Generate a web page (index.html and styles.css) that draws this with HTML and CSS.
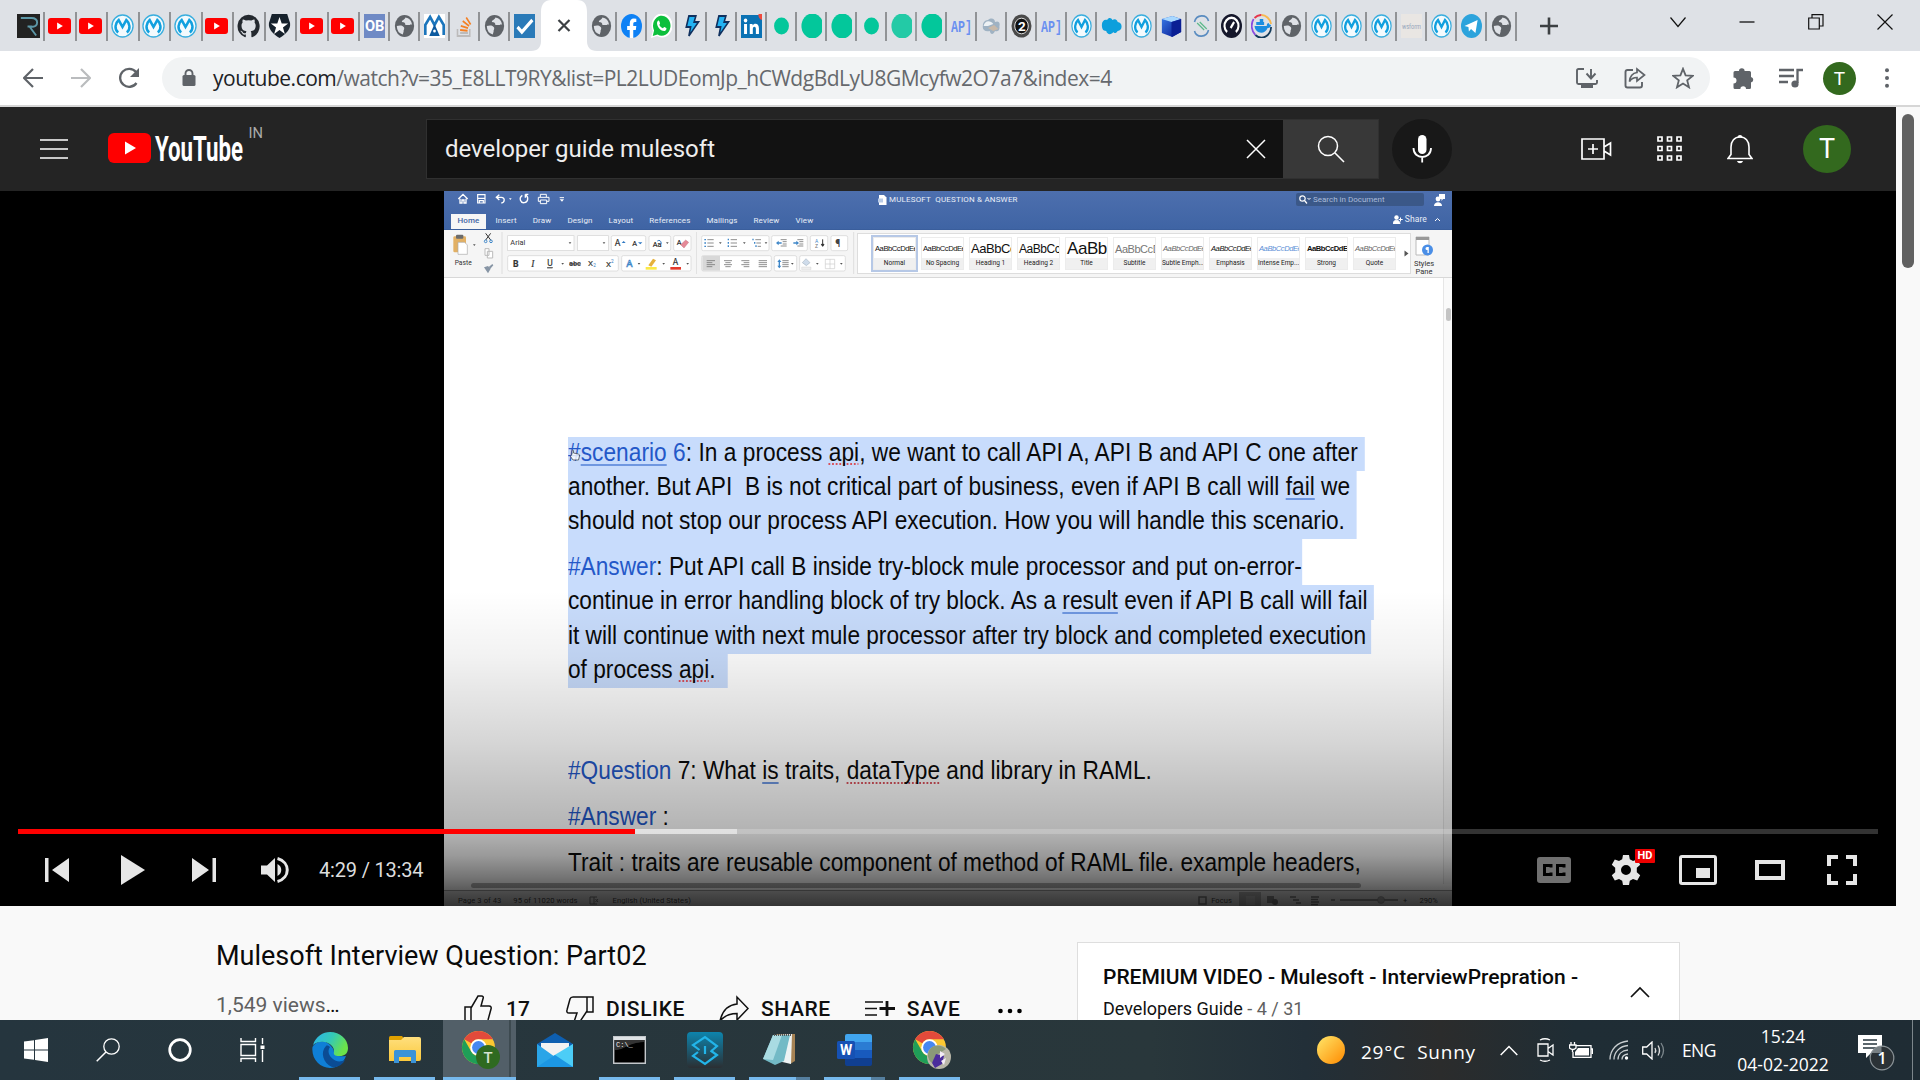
FILE: index.html
```html
<!DOCTYPE html>
<html lang="en">
<head>
<meta charset="utf-8">
<title>Mulesoft Interview Question: Part02 - YouTube</title>
<link rel="stylesheet" href="styles.css">
</head>
<body>
<svg class="defs" aria-hidden="true">
  <defs>
    <linearGradient id="gEdge" x1="0" y1="0" x2="1" y2="0.4"><stop offset="0" stop-color="#2bb3ee"/><stop offset=".55" stop-color="#35c9b5"/><stop offset="1" stop-color="#6be34a"/></linearGradient>
    <linearGradient id="gSun" x1="0" y1="0" x2="1" y2="1"><stop offset="0" stop-color="#ffe76a"/><stop offset="1" stop-color="#ff8a00"/></linearGradient>
    <linearGradient id="gFold" x1="0" y1="0" x2="0" y2="1"><stop offset="0" stop-color="#ffdf7e"/><stop offset="1" stop-color="#fbc93c"/></linearGradient>
    <linearGradient id="gStudio" x1="0" y1="0" x2="0" y2="1"><stop offset="0" stop-color="#0d84ad"/><stop offset="1" stop-color="#2b2f33"/></linearGradient>
    <linearGradient id="gCube" x1="0" y1="0" x2="1" y2="1"><stop offset="0" stop-color="#3a7be8"/><stop offset="1" stop-color="#06148c"/></linearGradient>
  </defs>
  <symbol id="f-r" viewBox="0 0 24 24" preserveAspectRatio="none"><path d="M0 0h24v24H0z" fill="#222"/><path d="M4 4h11c4 0 6 2 6 4.500s-2 5-6 4h-4M13 12.500l7 9" fill="none" stroke="#5d98a8" stroke-width="2"/></symbol>
  <symbol id="f-yt" viewBox="0 0 24 24" preserveAspectRatio="none"><rect y="4" width="24" height="16" rx="3" fill="#f00"/><path d="M9.500 8.500v7l6-3.500z" fill="#fff"/></symbol>
  <symbol id="f-m" viewBox="0 0 24 24" preserveAspectRatio="none"><circle cx="12" cy="12" r="11" fill="#f3fafd" stroke="#3aaede" stroke-width="1.400"/><path d="M7.500 18.500C3 15 4.500 9 8 6l4 7 4-7c3.500 3 5 9 .5 12.500" fill="none" stroke="#11a0df" stroke-width="2.600"/></symbol>
  <symbol id="f-gh" viewBox="0 0 24 24" preserveAspectRatio="none"><path fill="#24292f" d="M12 .8a11.500 11.500 0 0 0-3.600 22.400c.6.1.8-.2.8-.6v-2c-3.200.7-3.900-1.500-3.900-1.500-.5-1.300-1.300-1.700-1.300-1.700-1-.7.1-.7.1-.7 1.200.1 1.800 1.200 1.800 1.200 1 1.800 2.700 1.300 3.400 1 .1-.8.400-1.300.7-1.600-2.600-.3-5.300-1.300-5.300-5.700 0-1.300.5-2.300 1.200-3.100-.1-.3-.5-1.500.1-3.100 0 0 1-.3 3.200 1.200a11 11 0 0 1 5.800 0c2.200-1.500 3.200-1.200 3.200-1.200.6 1.600.2 2.800.1 3.100.8.800 1.200 1.900 1.200 3.100 0 4.400-2.700 5.400-5.300 5.700.4.400.8 1.100.8 2.200v3.100c0 .3.200.7.800.6A11.500 11.500 0 0 0 12 .8z"/></symbol>
  <symbol id="f-auth" viewBox="0 0 24 24" preserveAspectRatio="none"><path d="M4 0h16l3 9c1 6-4 11-11 15C5 20 0 15 1 9z" fill="#16212c"/><path d="m12 3 2.300 6.500H21l-5.400 4 2 6.500-5.600-4-5.600 4 2-6.500L3 9.500h6.700z" fill="#fff"/></symbol>
  <symbol id="f-globe" viewBox="0 0 24 24" preserveAspectRatio="none"><circle cx="12" cy="12" r="11" fill="#5f6368"/><path d="M13 3.500c-1 3-4 2-4 4.500 3 0 4 1 4 3h5c1-1 2-1 2.700 0A8.800 8.800 0 0 0 13 3.500zM3.200 12c3-1 7-1 8.300 1.500.8 2-1 2.500-.5 4l-1 3A9 9 0 0 1 3.200 12z" fill="#dee1e6"/></symbol>
  <symbol id="f-mm" viewBox="0 0 24 24" preserveAspectRatio="none"><path d="M0 0h24v24H0z" fill="#fff"/><path d="M1.500 21V11L7 3l5 8 5-8 5.500 8v10" fill="none" stroke="#1b75bc" stroke-width="3"/><path d="m12 10 6 12H6z" fill="#0c5aa0"/><circle cx="12" cy="17" r="1.600" fill="#fff"/></symbol>
  <symbol id="f-so" viewBox="0 0 24 24" preserveAspectRatio="none"><path d="M4 15v7h14v-7M7 19h9" fill="none" stroke="#bcbbbb" stroke-width="1.800"/><path d="m7 16 8.500.8M7.800 11.800l8.200 2.400M10 7l7.200 5M14 3.500l5 7" stroke="#f48024" stroke-width="1.900"/></symbol>
  <symbol id="f-check" viewBox="0 0 24 24" preserveAspectRatio="none"><path d="M0 0h24v24H0z" fill="#2a7ab8"/><path d="m4 13 5 5L21 6" fill="none" stroke="#fff" stroke-width="3.500"/></symbol>
  <symbol id="f-fb" viewBox="0 0 24 24" preserveAspectRatio="none"><circle cx="12" cy="12" r="12" fill="#0e81f5"/><path d="M10 24v-8H7v-4h3V9.500C10 6 12 4.500 14.500 4.500l3 .2V8H16c-1.500 0-2 .8-2 2v2h3.500l-.6 4H14v8z" fill="#fff"/></symbol>
  <symbol id="f-wa" viewBox="0 0 24 24" preserveAspectRatio="none"><path d="m0 24 2-7A12 12 0 1 1 7 22z" fill="#fff"/><path d="m2 22 1.500-5.500A10 10 0 1 1 7.500 20.500z" fill="#0bbf3c"/><path d="M7 8c1-2 2-2 2.500-.8l.8 2c.2.800-1 1.200-.7 1.800 1 1.700 2.300 2.700 4 3.300.7 0 1-1.500 1.800-1.200l2 1c1 .5-.3 2.700-1.700 2.900C11 17.500 6 12 7 8z" fill="#fff"/></symbol>
  <symbol id="f-bolt" viewBox="0 0 24 24" preserveAspectRatio="none"><path d="M9 2h8l-2 6h5L9 22l2-9H6z" fill="#22b3f3" stroke="#10305e" stroke-width="1.800"/></symbol>
  <symbol id="f-in" viewBox="0 0 24 24" preserveAspectRatio="none"><rect y="1" width="24" height="23" fill="#0a72b4"/><path d="M3.500 10h3.400v10H3.500zM10 10h3.200v1.500c2-2.700 7.300-2.300 7.300 2.700V20H17v-5c0-3-3.500-2.700-3.500 0v5H10z" fill="#fff"/><circle cx="5.200" cy="6.500" r="2" fill="#fff"/><path d="M24 6a5 5 0 0 1-4-6h4z" fill="#f04a3e"/></symbol>
  <symbol id="f-dot" viewBox="0 0 24 24" preserveAspectRatio="none"><circle cx="12" cy="12" r="8.500" fill="#03c79b"/></symbol>
  <symbol id="f-disc" viewBox="0 0 24 24" preserveAspectRatio="none"><circle cx="13" cy="12" r="12.500" fill="#03c79b"/></symbol>
  <symbol id="f-cloud" viewBox="0 0 24 24" preserveAspectRatio="none"><path d="M2 13a6 6 0 0 1 6-7c4-3 8-1 8 2 5-2 6 2 5 4 1 5-3 6-5 5-2 4-5 4-6 0-5 1-8-1-8-4z" fill="#9fb2c3"/><path d="M3 12c1-6 8-6 11-2l-6 2z" fill="#edf1f4"/><path d="m8 14 7-3 5 4-6 2z" fill="#c8b9a9"/></symbol>
  <symbol id="f-sf" viewBox="0 0 24 24" preserveAspectRatio="none"><path d="M1 11c0-4 3-6 6-5 2-3 5-2 6 0 3-2 6 0 6 2 6 0 6 9 0 9-1 2-4 3-5 1-2 3-7 3-8-1-4 0-5-3-5-6z" fill="#0c9fdc"/></symbol>
  <symbol id="f-cube" viewBox="0 0 24 24" preserveAspectRatio="none"><path d="m1 5 12-3 10 3v13l-10 5-12-4z" fill="url(#gCube)"/><path d="m1 5 12-3 10 3-11 3z" fill="#a8d8ff"/><path d="M12 8v15l11-5V5z" fill="#0a1f94"/></symbol>
  <symbol id="f-s" viewBox="0 0 24 24" preserveAspectRatio="none"><path d="M4 8C6 0 18 0 20 7M4 17c2 7 14 7 16-1" fill="none" stroke="#5a8cc0" stroke-width="1.800"/><path d="m7 9 8 7m-5-8 8 7" stroke="#5cb98a" stroke-width="1.500"/></symbol>
  <symbol id="f-gauge" viewBox="0 0 24 24" preserveAspectRatio="none"><circle cx="12" cy="12" r="12" fill="#15172b"/><path d="M7 18a8 8 0 1 1 10 0" fill="none" stroke="#fff" stroke-width="2.400"/><path d="m11 14 4-6" stroke="#fff" stroke-width="2.400"/></symbol>
  <symbol id="f-docker" viewBox="0 0 24 24" preserveAspectRatio="none"><path d="M4 4a11 11 0 0 1 8-3" fill="none" stroke="#e5344a" stroke-width="2"/><path d="M12 1c5 0 10 4 11 9" fill="none" stroke="#f8b84e" stroke-width="2"/><path d="M23 13a11 11 0 0 1-18 8" fill="none" stroke="#123a5a" stroke-width="2"/><path d="M5 21A12 12 0 0 1 3 5" fill="none" stroke="#8a4be0" stroke-width="2"/><path d="M4 12h14c0-2 1-3 2-3 1 1 1 2 3 2-1 3-3 3-4 3-3 7-14 6-15-2z" fill="#1b8de0"/><path d="M6 8h9v3H6zM10 5h4v3h-4z" fill="#1b8de0"/></symbol>
  <symbol id="f-tg" viewBox="0 0 24 24" preserveAspectRatio="none"><circle cx="12" cy="12" r="12" fill="#2ca3dc"/><path d="m4 12 15-6-2.500 13-5-4-2.500 2.500-.5-4.500z" fill="#fff"/></symbol>
  <symbol id="chrome" viewBox="0 0 36 36"><circle cx="18" cy="18" r="17" fill="#fbc832"/><path d="M3.300 9.500A17 17 0 0 1 32.700 9.500H18a8.500 8.500 0 0 0-7.400 4.200z" fill="#e24a3b"/><path d="M3.300 9.500A17 17 0 0 0 18 35l7.400-12.700a8.500 8.500 0 0 1-14.800 0z" fill="#1f9e58"/><circle cx="18" cy="18" r="8.500" fill="#fff"/><circle cx="18" cy="18" r="6.600" fill="#4688f1"/></symbol>
</svg>

<header class="tabstrip">
  <nav class="tabs wide">
    <span class="tab"><svg><use href="#f-r"/></svg></span><span class="tab"><svg><use href="#f-yt"/></svg></span><span class="tab"><svg><use href="#f-yt"/></svg></span><span class="tab"><svg><use href="#f-m"/></svg></span><span class="tab"><svg><use href="#f-m"/></svg></span><span class="tab"><svg><use href="#f-m"/></svg></span><span class="tab"><svg><use href="#f-yt"/></svg></span><span class="tab"><svg><use href="#f-gh"/></svg></span><span class="tab"><svg><use href="#f-auth"/></svg></span><span class="tab"><svg><use href="#f-yt"/></svg></span><span class="tab"><svg><use href="#f-yt"/></svg></span>
  </nav>
  <nav class="tabs">
    <span class="tab"><svg viewBox="0 0 21 24"><path d="M0 0h21v24H0z" fill="#6f8ac5"/><text x="1" y="17" font-family="Roboto, sans-serif" font-weight="700" font-size="14.500" textLength="19.500" lengthAdjust="spacingAndGlyphs" fill="#fff">OB</text></svg></span><span class="tab"><svg><use href="#f-globe"/></svg></span><span class="tab"><svg><use href="#f-mm"/></svg></span><span class="tab"><svg><use href="#f-so"/></svg></span><span class="tab"><svg><use href="#f-globe"/></svg></span><span class="tab last"><svg><use href="#f-check"/></svg></span>
  </nav>
  <div class="tab-active"><svg width="66" height="51" viewBox="0 0 66 51"><path d="M0 51c7 0 10-4 10-10V12C10 4 14 0 20 0h26c7 0 10 4 10 12v29c0 6 3 10 10 10z" fill="#fff"/><path d="m27.500 20 11 11m0-11-11 11" stroke="#3c4043" stroke-width="2.200"/></svg></div>
  <nav class="tabs">
    <span class="tab"><svg><use href="#f-globe"/></svg></span><span class="tab"><svg><use href="#f-fb"/></svg></span><span class="tab"><svg><use href="#f-wa"/></svg></span><span class="tab"><svg><use href="#f-bolt"/></svg></span><span class="tab"><svg><use href="#f-bolt"/></svg></span><span class="tab"><svg><use href="#f-in"/></svg></span><span class="tab"><svg><use href="#f-dot"/></svg></span><span class="tab"><svg><use href="#f-disc"/></svg></span><span class="tab"><svg><use href="#f-disc"/></svg></span><span class="tab"><svg><use href="#f-dot"/></svg></span><span class="tab soft"><svg><use href="#f-disc"/></svg></span><span class="tab"><svg><use href="#f-disc"/></svg></span><span class="tab"><svg viewBox="0 0 21 24"><text x="0" y="17.500" font-family="Liberation Mono, monospace" font-weight="700" font-size="16" textLength="21" lengthAdjust="spacingAndGlyphs" fill="#6a90f0">AP]</text></svg></span><span class="tab"><svg><use href="#f-cloud"/></svg></span><span class="tab"><svg viewBox="0 0 21 24"><ellipse cx="10.500" cy="12" rx="10" ry="11.500" fill="#4a4a4a"/><ellipse cx="10.500" cy="12" rx="6.800" ry="7.800" fill="#111" stroke="#ddd"/><text x="7" y="17" font-family="Roboto, sans-serif" font-weight="700" font-size="13.500" textLength="7" fill="#fff">2</text></svg></span><span class="tab"><svg viewBox="0 0 21 24"><text x="0" y="17.500" font-family="Liberation Mono, monospace" font-weight="700" font-size="16" textLength="21" lengthAdjust="spacingAndGlyphs" fill="#6a90f0">AP]</text></svg></span><span class="tab"><svg><use href="#f-m"/></svg></span><span class="tab"><svg><use href="#f-sf"/></svg></span><span class="tab"><svg><use href="#f-m"/></svg></span><span class="tab"><svg><use href="#f-cube"/></svg></span><span class="tab"><svg><use href="#f-s"/></svg></span><span class="tab"><svg><use href="#f-gauge"/></svg></span><span class="tab"><svg><use href="#f-docker"/></svg></span><span class="tab"><svg><use href="#f-globe"/></svg></span><span class="tab"><svg><use href="#f-m"/></svg></span><span class="tab"><svg><use href="#f-m"/></svg></span><span class="tab"><svg><use href="#f-m"/></svg></span><span class="tab"><svg viewBox="0 0 21 24"><path d="M0 0h21v24H0z" fill="#e9e6e3"/><text x="1" y="14.500" font-family="Roboto, sans-serif" font-size="8" textLength="19" lengthAdjust="spacingAndGlyphs" fill="#93a5bb">wsform</text></svg></span><span class="tab"><svg><use href="#f-m"/></svg></span><span class="tab"><svg><use href="#f-tg"/></svg></span><span class="tab"><svg><use href="#f-globe"/></svg></span>
  </nav>
  <svg class="newtab" width="18" height="18" viewBox="0 0 18 18"><path d="M9 .5v17M0 9h18" stroke="#3c4043" stroke-width="2.600"/></svg>
  <div class="winbtns">
    <svg width="16" height="16" viewBox="0 0 16 16"><path d="m.5 3.500 7.500 9 7.500-9" fill="none" stroke="#111" stroke-width="1.200"/></svg>
    <svg width="16" height="16" viewBox="0 0 16 16"><path d="M.5 8h15" stroke="#111" stroke-width="1.300"/></svg>
    <svg width="16" height="16" viewBox="0 0 16 16"><path d="M.7 4h10.600v11H.7zM4 4V.7h11V12h-3.500" fill="none" stroke="#111" stroke-width="1.200"/></svg>
    <svg width="16" height="16" viewBox="0 0 16 16"><path d="m.5.500 15 15m0-15-15 15" stroke="#111" stroke-width="1.200"/></svg>
  </div>
</header>

<div class="toolbar">
  <svg class="back" width="20" height="20" viewBox="0 0 20 20"><path d="M20 10H2M10 1l-9 9 9 9" fill="none" stroke="#5f6368" stroke-width="2.200"/></svg>
  <svg class="fwd" width="20" height="20" viewBox="0 0 20 20"><path d="M0 10h18M10 1l9 9-9 9" fill="none" stroke="#babcbe" stroke-width="2.200"/></svg>
  <svg class="reload" width="22" height="22" viewBox="0 0 22 22"><path d="M18.500 16A9 9 0 1 1 18 5" fill="none" stroke="#5f6368" stroke-width="2.300"/><path d="M21 1v9h-9z" fill="#5f6368"/></svg>
  <div class="omnibox">
    <svg width="14" height="18" viewBox="0 0 14 18"><rect x=".5" y="6" width="13" height="11" rx="1.500" fill="#5f6368"/><path d="M3.500 7V4.500a3.500 3.500 0 0 1 7 0V7" fill="none" stroke="#5f6368" stroke-width="1.900"/></svg>
    <p class="url"><b>youtube.com</b>/watch?v=35_E8LLT9RY&amp;list=PL2LUDEomJp_hCWdgBdLyU8GMcyfw2O7a7&amp;index=4</p>
    <svg width="22" height="22" viewBox="0 0 22 22"><path d="M8 2H2.500Q1 2 1 3.500v12Q1 17 2.500 17h17q1.500 0 1.500-1.500V13M15 2v9m-4.500-4.500L15 11.500 19.500 6.500" fill="none" stroke="#5f6368" stroke-width="1.900"/><path d="M5 17h12v4H5z" fill="#5f6368"/></svg>
    <svg width="22" height="22" viewBox="0 0 22 22"><path d="M9 3H3.500Q1.500 3 1.500 5v13.500q0 2 2 2H16q2 0 2-2V15" fill="none" stroke="#5f6368" stroke-width="1.900"/><path d="M13 5.500V2l7.500 6L13 14v-3.500c-4 0-6 1.500-7.500 4C6 9 9 6 13 5.500z" fill="none" stroke="#5f6368" stroke-width="1.700"/></svg>
    <svg width="22" height="22" viewBox="0 0 22 22"><path d="m11 1.800 2.600 6.600 7.100.5-5.500 4.500 1.800 6.900-6-3.800-6 3.800 1.800-6.900L1.300 8.900l7.100-.5z" fill="none" stroke="#5f6368" stroke-width="1.800"/></svg>
  </div>
  <svg width="23" height="23" viewBox="0 0 23 23"><path d="M7 4a2.800 2.800 0 0 1 5.600 0h4.900q1.500 0 1.500 1.500V10a2.800 2.800 0 0 1 0 5.500v5q0 1.500-1.500 1.500H14a2.800 2.800 0 0 0-5.600 0H3q-1.500 0-1.500-1.500v-4a2.800 2.800 0 0 0 0-6V5.500Q1.500 4 3 4z" fill="#5f6368"/></svg>
  <svg class="media" width="25" height="20" viewBox="0 0 25 20"><path d="M1 2h15M1 8h15M1 14h9" stroke="#5f6368" stroke-width="2.300"/><path d="M19.500 15V2H25" fill="none" stroke="#5f6368" stroke-width="2.300"/><circle cx="17" cy="16" r="3.600" fill="#5f6368"/></svg>
  <span class="avatar small">T</span>
  <svg class="kebab" width="6" height="20" viewBox="0 0 6 20"><circle cx="3" cy="2.300" r="2" fill="#5f6368"/><circle cx="3" cy="10" r="2" fill="#5f6368"/><circle cx="3" cy="17.700" r="2" fill="#5f6368"/></svg>
</div>

<div class="viewport">
  <div class="page">
    <header class="masthead">
      <svg width="28" height="20" viewBox="0 0 28 20"><path d="M0 1h28M0 10h28M0 19h28" stroke="#fff" stroke-width="1.500"/></svg>
      <svg class="logo" width="160" height="44" viewBox="0 0 160 44"><rect y="9" width="43" height="30" rx="6" fill="#f00"/><path d="M17 17.500v13l11-6.500z" fill="#fff"/><text x="47" y="37" font-family="Roboto, sans-serif" font-weight="700" font-size="35" textLength="88" lengthAdjust="spacingAndGlyphs" fill="#fff">YouTube</text><text x="140.500" y="14" font-family="Roboto, sans-serif" font-size="15.500" textLength="14.500" lengthAdjust="spacingAndGlyphs" fill="#aaa">IN</text></svg>
      <div class="search">
        <div class="field"><span>developer guide mulesoft</span><svg width="20" height="20" viewBox="0 0 20 20"><path d="m1 1 18 18m0-18L1 19" stroke="#fff" stroke-width="1.500"/></svg></div>
        <div class="go"><svg width="28" height="28" viewBox="0 0 28 28"><circle cx="11" cy="11" r="9.500" fill="none" stroke="#fff" stroke-width="1.500"/><path d="m18 18 9 9" stroke="#fff" stroke-width="1.600"/></svg></div>
      </div>
      <div class="mic"><svg width="20" height="28" viewBox="0 0 20 28"><rect x="6" width="8.500" height="19" rx="4.250" fill="#fff"/><path d="M1.500 13c0 12 17.500 12 17.500 0M10.200 22v5.500" fill="none" stroke="#fff" stroke-width="1.800"/></svg></div>
      <div class="masticons">
        <svg width="31" height="22" viewBox="0 0 31 22"><path d="M1 1h22v20H1zM23 9l6.500-4v12L23 13M12 6v10M7 11h10" fill="none" stroke="#fff" stroke-width="1.700"/></svg>
        <svg width="25" height="25" viewBox="0 0 25 25"><path d="M1 1h4v4H1zm9.500 0h4v4h-4zM20 1h4v4h-4zM1 10.500h4v4H1zm9.500 0h4v4h-4zm9.500 0h4v4h-4zM1 20h4v4H1zm9.500 0h4v4h-4zM20 20h4v4h-4z" fill="none" stroke="#fff" stroke-width="1.700"/></svg>
        <svg width="26" height="30" viewBox="0 0 26 30"><path d="M1 24.500h24l-3-4V13c0-6-3.500-10-9-10s-9 4-9 10v7.500z" fill="none" stroke="#fff" stroke-width="1.600"/><path d="M10.500 3.500a2.500 2.500 0 0 1 5 0M10 27h6c-1 3-5 3-6 0" fill="#fff"/></svg>
        <span class="avatar">T</span>
      </div>
    </header>

    <section class="player">
      <div class="slide">
        <div class="wtitle">
          <div class="wbar">
            <svg class="qat" width="120" height="22" viewBox="50 8 360 66"><g fill="none" stroke="#fff" stroke-width="4"><path d="m57 35 14-14 14 14M62 34v13h6v-9h6v9h6V34"/><path d="M115 22h22v25h-22zM116 33h20M120 46v-6h12v6" stroke-width="3.500"/><path d="m180 22-9 8 9 8M172 30h14c12 0 11 16 0 17"/><path d="M249 24c-12 8-5 24 6 22 13-2 13-18 3-24M258 21h9M258 21v10"/><path d="M303 29v-8h18v8M303 42h-6V30h32v12h-7M303 38h19v11h-19z" stroke-width="3"/><path d="M361 31h13" stroke-width="3"/></g><path d="M361 36h13l-6 7zM209 33h8l-4 5z" fill="#fff"/></svg>
            <p class="doctitle"><svg width="9" height="10" viewBox="0 0 9 10"><path d="M1 0h5l2.500 2.500V10H1z" fill="#fff"/><path d="M0 3.500h5v4H0z" fill="#b9cbe6"/></svg>MULESOFT&nbsp; QUESTION &amp; ANSWER</p>
            <p class="docsearch"><svg width="12" height="9" viewBox="0 0 12 9"><circle cx="3.500" cy="3.500" r="2.700" fill="none" stroke="#fff" stroke-width="1.200"/><path d="m5.500 5.500 2.500 3" stroke="#fff" stroke-width="1.200"/><path d="m8.500 3 1.500 1.500L11.500 3" fill="none" stroke="#fff"/></svg>Search in Document</p>
            <svg class="person" width="12" height="13" viewBox="0 0 12 13"><path d="M5 1h6v5H9L7.500 8V6H5z" fill="#fff"/><circle cx="4" cy="6" r="2.400" fill="#fff"/><path d="M0 13c0-5 8-5 8 0z" fill="#fff"/></svg>
          </div>
          <div class="wtabs"><b>Home</b><span>Insert</span><span>Draw</span><span>Design</span><span>Layout</span><span>References</span><span>Mailings</span><span>Review</span><span>View</span>
            <p class="share"><svg width="10" height="9" viewBox="0 0 10 9"><circle cx="3.500" cy="2.500" r="2.200" fill="#fff"/><path d="M0 9c0-5 7-5 7 0zM7.500 2.500v4M5.700 4.500h4" fill="#fff" stroke="#fff"/></svg>Share<svg class="up" width="7" height="5" viewBox="0 0 7 5"><path d="M1 4l2.500-2.500L6 4" fill="none" stroke="#fff"/></svg></p>
          </div>
        </div>
        <div class="ribbon">
          <svg width="252" height="47" viewBox="12 126 756 141" font-family="Roboto, sans-serif">
            <rect x="40" y="145" width="38" height="48" rx="4" fill="#e2b064"/><rect x="48" y="140" width="22" height="12" rx="3" fill="#6b6b6b"/><path d="M54 163h20l8 8v28H54z" fill="#fff" stroke="#aaa" stroke-width="2"/><path d="M99 169h8l-4 5z" fill="#555"/>
            <text x="44" y="232" font-size="20" textLength="51" fill="#333">Paste</text>
            <g fill="none" stroke-width="3"><path d="m137 136 15 20m0-20-15 20" stroke="#333"/><circle cx="137" cy="160" r="4" stroke="#3f87c8"/><circle cx="153" cy="160" r="4" stroke="#3f87c8"/><path d="M135 182h12v20h-12zM142 190h16v20h-16z" stroke="#bbb" fill="#fff"/></g><path d="m132 238 12-4 8 8-8 14zM147 236l10-8 3 4-9 10z" fill="#8795a5"/>
            <g fill="#fff" stroke="#d2d2d2" stroke-width="2"><path d="M186 132v126" /><rect x="203" y="143" width="199" height="45"/><rect x="413" y="143" width="92" height="45"/><rect x="514" y="143" width="103" height="45" rx="5"/><rect x="627" y="143" width="65" height="45" rx="5"/><rect x="701" y="143" width="52" height="45" rx="5"/><rect x="203" y="203" width="332" height="46" rx="5"/><rect x="545" y="203" width="208" height="46" rx="5"/></g>
            <text x="211" y="171" font-size="22" textLength="45" fill="#333">Arial</text><path d="M386 163h8l-4 5zM488 163h8l-4 5zM678 163h8l-4 5zM364 225h8l-4 5zM593 225h8l-4 5zM667 225h8l-4 5zM739 225h8l-4 5z" fill="#555"/>
            <g fill="#333" stroke="#333" stroke-width=".6" font-size="26"><text x="524" y="175">A</text><text x="577" y="175" font-size="22">A</text><text x="638" y="176" font-size="22">Aa</text><text x="710" y="172" font-size="22">A</text><text x="219" y="237" font-weight="700">B</text><text x="274" y="237" font-style="italic" font-size="28" font-family="Liberation Serif, serif">I</text><text x="322" y="235" text-decoration="underline" font-size="25">U</text><text x="388" y="234" font-size="20" text-decoration="line-through" textLength="34">abc</text><text x="444" y="234" font-size="24">X</text><text x="498" y="238" font-size="24">X</text><text x="559" y="238" fill="#cfe2f6" stroke="#3f87c8" stroke-width="2" font-size="29">A</text><text x="698" y="232" font-size="25">A</text></g>
            <text x="460" y="238" font-size="14" fill="#2f78c2">2</text><text x="513" y="225" font-size="14" fill="#2f78c2">2</text><path d="m545 165 6-6 6 6zM594 163h13l-6 6z" fill="#2f78c2"/><path d="M652 159q10-6 12 8" fill="none" stroke="#2f78c2" stroke-width="3"/><path d="m722 170 15-14 9 7-14 17z" fill="#e58a98" stroke="#b05a6a"/><path d="m625 232 14-20 9 5-14 19z" fill="#e5b13c"/><path d="M617 237h33v8h-33z" fill="#fbe947"/><path d="M691 237h32v8h-32z" fill="#e4392b"/>
          </svg>
          <svg width="161" height="47" viewBox="768 126 483 141">
            <g fill="#fff" stroke="#d2d2d2" stroke-width="2"><path d="M769 132v126M1241 132v126"/><rect x="785" y="143" width="202" height="45" rx="5"/><rect x="995" y="143" width="107" height="45" rx="5"/><rect x="1111" y="143" width="52" height="45" rx="5"/><rect x="1173" y="143" width="50" height="45" rx="5"/><rect x="785" y="203" width="209" height="46" rx="5"/><rect x="1003" y="203" width="67" height="46" rx="5"/><rect x="1079" y="203" width="137" height="46" rx="5"/></g>
            <path d="M787 204h53v44h-53z" fill="#d8d8d8"/>
            <path d="M802 155h19m-19 10h19m-19 10h19M872 155h19m-19 10h19m-19 10h19M946 155h17m-14 10h14m-10 10h10M1022 155h18m-12 6h12m-12 7h12m-18 6h18M1072 155h18m-12 6h12m-12 7h12m-18 6h18M800 218h25m-25 6h17m-17 6h25m-25 6h17M852 218h24m-20 6h16m-20 6h24m-20 6h16M904 218h24m-17 6h17m-24 6h24m-17 6h17M956 218h25m-25 6h25m-25 6h25m-25 6h25M1027 218h19m-19 6h19m-19 6h19m-19 6h19" stroke="#777" stroke-width="2.500"/>
            <path d="M793 155h5m-5 10h5m-5 10h5M865 152v5m0 5v5m0 5v5M939 152v5m5 5v5m4 5v5M1018 219v19" stroke="#3f87c8" stroke-width="4"/><path d="m1008 165 8-7v5h9v4h-9v5zM1077 165l-8-7v5h-9v4h9v5zM1012 222l6-8 6 8zM1012 233l6 8 6-8z" fill="#3f87c8"/>
            <path d="M837 163h8l-4 5zM909 163h8l-4 5zM974 163h8l-4 5zM1053 225h8l-4 5zM1128 225h8l-4 5zM1200 225h8l-4 5z" fill="#555"/>
            <text x="1125" y="164" font-family="Roboto, sans-serif" font-size="15" fill="#3f87c8">A</text><text x="1125" y="180" font-family="Roboto, sans-serif" font-size="15" fill="#777">Z</text><path d="M1148 154v18M1144 169l4 6 4-6z" stroke="#333" stroke-width="3"/>
            <text x="1186" y="176" font-family="Roboto, sans-serif" font-size="30" font-weight="700" fill="#444">¶</text>
            <path d="m1087 224 11-12 12 12-11 9z" fill="#cfdceb" stroke="#789"/><path d="M1085 237h28v8h-28z" fill="#eee" stroke="#ccc"/><path d="M1156 214h28v28h-28zM1170 214v28M1156 228h28" fill="none" stroke="#ccc" stroke-width="2"/>
          </svg>
          <div class="gallery">
            <div class="card sel"><i>AaBbCcDdEe</i><u>Normal</u></div>
            <div class="card"><i>AaBbCcDdEe</i><u>No Spacing</u></div>
            <div class="card"><i class="h1">AaBbCc</i><u>Heading 1</u></div>
            <div class="card"><i class="h2">AaBbCcD</i><u>Heading 2</u></div>
            <div class="card"><i class="tt">AaBbC</i><u>Title</u></div>
            <div class="card"><i class="sub">AaBbCcD</i><u>Subtitle</u></div>
            <div class="card"><i class="it gray">AaBbCcDdEe</i><u>Subtle Emph...</u></div>
            <div class="card"><i class="it">AaBbCcDdEe</i><u>Emphasis</u></div>
            <div class="card"><i class="it blue">AaBbCcDdEe</i><u>Intense Emp...</u></div>
            <div class="card"><i class="bd">AaBbCcDdE</i><u>Strong</u></div>
            <div class="card"><i class="it gray">AaBbCcDdEe</i><u>Quote</u></div>
            <svg width="5" height="7" viewBox="0 0 5 7"><path d="M.5.500v6l4-3z" fill="#555"/></svg>
          </div>
          <div class="pane"><svg width="18" height="20" viewBox="0 0 18 20"><path d="M1 1h13v18H1z" fill="#fff" stroke="#bbb"/><path d="M1 1h13v3H1z" fill="#999"/><circle cx="12.500" cy="14" r="5.500" fill="#4a8ee6"/><path d="M13.800 17v-6H12a1.500 1.500 0 0 0 0 3h.5v3" fill="#fff"/></svg><span>Styles<br>Pane</span></div>
        </div>
        <div class="docarea">
          <div class="paper">
            <p class="first"><span class="ln l1"><em>#<ins>scenario</ins> 6</em>: In a process <s>api</s>, we want to call API A, API B and API C one after</span><span class="ln l2">another. But API&nbsp; B is not critical part of business, even if API B call will <ins>fail</ins> we</span><span class="ln l3">should not stop our process API execution. How you will handle this scenario.</span></p>
            <p><span class="ln l4"><em>#Answer</em>: Put API call B inside try-block mule processor and put on-error-</span><span class="ln l5">continue in error handling block of try block. As a <ins>result</ins> even if API B call will fail</span><span class="ln l6">it will continue with next mule processor after try block and completed execution</span><span class="ln l7">of process <s>api</s>.</span></p>
            <p class="q7"><span class="row"><em>#Question</em> 7: What <ins>is</ins> traits, <s>dataType</s> and library in RAML.</span></p>
            <p class="plain"><span class="row"><em>#Answer</em> :</span></p>
            <p class="plain"><span class="row">Trait : traits are reusable component of method of RAML file. example headers,</span></p>
          </div>
          <div class="vscroll"><div></div></div>
          <svg class="hand" width="12" height="14" viewBox="0 0 12 14"><path d="M3 6V2.500q1-1 1.500 0V5l5 1q1 .5 1 2l-1 4H4L1.500 8.500z" fill="#fff" stroke="#444" stroke-width=".9"/></svg>
        </div>
        <div class="hscroll"></div>
        <div class="status">
          <span>Page 3 of 43</span><span>95 of 11020 words</span><svg width="10" height="9" viewBox="0 0 10 9"><path d="M1 1h4v7H1zM5 1h3M5 8h3M6.500 3l2.500 3M9 3 6.500 6" fill="none" stroke="#777"/></svg><span class="lang">English (United States)</span>
          <span class="focus"><svg width="9" height="9" viewBox="0 0 9 9"><path d="M1 1h7v7H1z" fill="none" stroke="#777" stroke-width="1.500"/></svg> Focus</span>
          <svg class="views" width="160" height="16" viewBox="0 0 160 16"><path d="M0 0h22v16H0z" fill="#a8a8a8"/><path d="M7 4h9v9H7z" fill="#bbb"/><path d="M28 4h7v7h-7z" fill="#888"/><circle cx="36" cy="10" r="3" fill="#777"/><path d="M51 5h6m-3 3h6m-3 3h5M72 5h8m-8 2.500h7m-7 2.500h8m-8 2.500h7M92 8h4M101 8h58" stroke="#777" stroke-width="1.300"/><circle cx="142" cy="8" r="3.500" fill="#aaa" stroke="#777" stroke-width=".5"/></svg><span class="plus">+</span><span class="zoom">290%</span>
        </div>
      </div>
      <div class="chrome-ui">
        <div class="progress"><div class="loaded"></div><div class="played"></div></div>
        <div class="controls">
          <svg width="24" height="24" viewBox="0 0 24 24"><path d="M0 0h3.500v24H0zM24 0v24L7 12z" fill="#e6e6e6"/></svg>
          <svg class="play" width="24" height="30" viewBox="0 0 24 30"><path d="M0 0v30l24-15z" fill="#e6e6e6"/></svg>
          <svg class="next" width="24" height="24" viewBox="0 0 24 24"><path d="M20.500 0H24v24h-3.500zM0 0v24l17-12z" fill="#e6e6e6"/></svg>
          <svg class="vol" width="28" height="28" viewBox="0 0 28 28"><path d="M0 9.500h6L14 2v24l-8-7.500H0z" fill="#e6e6e6"/><path d="M16.500 8c5 2.500 5 9.500 0 12z" fill="#e6e6e6"/><path d="M16.500 2.500c13 3.500 13 19.500 0 23" fill="none" stroke="#e6e6e6" stroke-width="3"/></svg>
          <span class="time">4:29 / 13:34</span>
          <svg class="cc" width="34" height="26" viewBox="0 0 34 26"><rect width="34" height="26" rx="3" fill="#707070"/><path d="M14 10.500V8.500H7.500v9H14v-2M27 10.500V8.500h-6.500v9H27v-2" fill="none" stroke="#000" stroke-width="3"/></svg>
          <div class="gear"><svg width="30" height="30" viewBox="0 0 30 30"><path fill="#e6e6e6" fill-rule="evenodd" d="M12 0h6l.8 4.200 3.200 1.900 4.200-1.500 3 5.200-3.400 2.900v4.600l3.400 2.900-3 5.200-4.200-1.500-3.200 1.900L18 30h-6l-.8-4.200L8 23.900l-4.200 1.500-3-5.200 3.400-2.900v-4.600L.8 9.800l3-5.200L8 6.100l3.200-1.900zM15 10a5 5 0 1 0 0 10 5 5 0 0 0 0-10z"/></svg><b>HD</b></div>
          <svg class="mini" width="38" height="30" viewBox="0 0 38 30"><rect x="1.500" y="1.500" width="35" height="27" rx="1.500" fill="none" stroke="#e6e6e6" stroke-width="3"/><path d="M17 13h14v10H17z" fill="#e6e6e6"/></svg>
          <svg class="theater" width="30" height="20" viewBox="0 0 30 20"><path d="M2 2h26v16H2z" fill="none" stroke="#e6e6e6" stroke-width="4"/></svg>
          <svg class="full" width="30" height="30" viewBox="0 0 30 30"><path d="M2 11V2h9M19 2h9v9M28 19v9h-9M11 28H2v-9" fill="none" stroke="#e6e6e6" stroke-width="4"/></svg>
        </div>
      </div>
    </section>

    <section class="below">
      <div class="info">
        <h1>Mulesoft Interview Question: Part02</h1>
        <div class="meta">
          <span class="views-count">1,549 views<i>…</i></span>
          <svg class="up" width="28" height="28" viewBox="0 0 28 28"><path d="M1 12h6v15H1zM7 13 14 1h3.500c1.500 0 2 1 1.700 2L17 11h8c2 0 2.500 1.500 2 3l-3 11c-.5 1.500-1.500 2-3 2H7" fill="none" stroke="#111" stroke-width="1.500"/></svg><span class="n17">17</span>
          <svg class="down" width="28" height="28" viewBox="0 0 28 28"><path d="M27 16h-6V1h6zM21 15 13 27h-3c-1.500 0-2-1-1.700-2L11 17H3c-2 0-2.500-1.500-2-3L4 3c.5-1.500 1.500-2 3-2h14" fill="none" stroke="#111" stroke-width="1.500"/></svg><span class="ls">DISLIKE</span>
          <svg class="shr" width="30" height="28" viewBox="0 0 30 28"><path d="M18 2v7C8 10 3 17 1 26c5-6 10-7.500 17-7.500V25l11-11.500z" fill="none" stroke="#111" stroke-width="1.500"/></svg><span class="ls">SHARE</span>
          <svg class="sav" width="30" height="18" viewBox="0 0 30 18"><path d="M0 2h18M0 8.500h12M0 15h12" stroke="#111" stroke-width="1.700"/><path d="M22 1v15M14.500 8.500H30" stroke="#111" stroke-width="2.800"/></svg><span class="ls">SAVE</span>
          <svg class="more" width="24" height="6" viewBox="0 0 24 6"><circle cx="2.500" cy="3" r="2.300"/><circle cx="12" cy="3" r="2.300"/><circle cx="21.500" cy="3" r="2.300"/></svg>
        </div>
      </div>
      <aside class="playlist">
        <div><h2>PREMIUM VIDEO - Mulesoft - InterviewPrepration -</h2><p>Developers Guide <i>- 4 / 31</i></p></div>
        <svg width="20" height="12" viewBox="0 0 20 12"><path d="m1 11 9-9 9 9" fill="none" stroke="#111" stroke-width="1.700"/></svg>
      </aside>
    </section>
  </div>
  <div class="pagescroll"><div></div></div>
</div>

<footer class="taskbar">
  <div class="start">
    <svg width="24" height="24" viewBox="0 0 24 24"><path d="m0 3.500 10-1.300v9.300H0zM11 2l13-2v11.500H11zM0 12.500h10v9.300L0 20.500zM11 12.500h13V24l-13-2z" fill="#fff"/></svg>
    <svg width="24" height="24" viewBox="0 0 24 24"><circle cx="15.500" cy="8.500" r="7.700" fill="none" stroke="#fff" stroke-width="1.300"/><path d="M10 14 .7 23.300" stroke="#fff" stroke-width="1.500"/></svg>
    <svg width="24" height="24" viewBox="0 0 24 24"><circle cx="12" cy="12" r="10.300" fill="none" stroke="#fff" stroke-width="2.700"/></svg>
    <svg width="25" height="24" viewBox="0 0 25 24"><path d="M1 0v3.500h14.500V0M1 6.500h14.500v11H1zM1 24v-3.500h14.500V24M22.500 0v6M22.500 12v12" fill="none" stroke="#fff" stroke-width="1.400"/><path d="M20.500 7.500h4v3.500h-4z" fill="#fff"/></svg>
  </div>
  <div class="apps">
    <span class="app run"><svg width="36" height="36" viewBox="0 0 36 36"><path d="M.5 15C3 10 11 7 17 12c3 3 5 5 5 8 1 4 6 5 12 4-3 8-9 12-16 12C8 36-1 27 .5 15z" fill="#0f7fd6"/><path d="M1 13C4 4 11 0 18 0c10 0 18 7 18 16 0 6-4 8-8 8-4 .5-7-1-6-4 1-9-13-14-21-7z" fill="url(#gEdge)"/><path d="M14 14c-6 6-3 17 6 21 6 1 11-3 13-7-4 2-9 2-12-1-4-3-6-8-3-12 -1-1-3-2-4-1z" fill="#0b4c94"/></svg></span>
    <span class="app run"><svg width="32" height="28" viewBox="0 0 32 28"><path d="M0 1.500Q0 0 1.500 0H13l2 2.500V6H0z" fill="#e0a100"/><path d="M0 4h12l3-3h15q2 0 2 2v20q0 2-2 2H0z" fill="url(#gFold)"/><path d="M5 27V15.500Q5 14 6.500 14h19q1.500 0 1.500 1.500V27h-5v-6H10v6z" fill="#3b93d8"/></svg></span>
    <span class="app run on"><svg width="40" height="40" viewBox="0 0 40 40"><use href="#chrome" width="35" height="35"/><circle cx="27" cy="27" r="12" fill="#2f6a20"/><text x="27" y="32.500" text-anchor="middle" font-family="Roboto, sans-serif" font-weight="500" font-size="15" fill="#d6e2d0">T</text></svg></span>
    <span class="app"><svg width="36" height="34" viewBox="0 0 36 34"><path d="M0 11 18 0l18 11v4H0z" fill="#0e5fb0"/><path d="M4 10h28v14H4z" fill="#f2f2f2"/><path d="M0 11 18 24 36 11v23H0z" fill="#2aa5e8"/><path d="m36 11-20 12 20 11z" fill="#4ccdf7"/><path d="M0 34 18 22l18 12z" fill="#1c97e4"/></svg></span>
    <span class="app run"><svg width="33" height="28" viewBox="0 0 33 28"><path d="M.7.700h31.600v26.600H.7z" fill="#000" stroke="#c4c8cc" stroke-width="1.400"/><path d="M1 1h31v3H1z" fill="#dfe3e6"/><path d="M2 14C12 14 14 7 31 6V4H2z" fill="#333"/><text x="3" y="10.500" font-family="Liberation Mono, monospace" font-size="7" fill="#eee">C:\_</text></svg></span>
    <span class="app run"><svg width="36" height="36" viewBox="0 0 36 36"><rect width="36" height="36" rx="4" fill="url(#gStudio)"/><path d="M12.500 18 6 13 18 5l12 9-5 4.500M11 20l-5 4 12 8 12-9-6.500-4.500M18 14v8" fill="none" stroke="#22b5ea" stroke-width="2.200"/></svg></span>
    <span class="app run multi"><svg width="34" height="34" viewBox="0 0 34 34"><path d="M13 1h19v27l-5 3z" fill="#a68355"/><path d="m12 2 17-1-1 30-13-3z" fill="#eef3f4"/><path d="M10 2h17l-6 26-9 4-12-6z" fill="#73bac6"/><path d="m10 2 9 0-9 25-10-1z" fill="#a9dbe2"/><path d="M11 2h18" stroke="#555" stroke-width="2" stroke-dasharray="1 1"/></svg></span>
    <span class="app run multi"><svg width="35" height="32" viewBox="0 0 35 32"><path d="M8 2q0-2 2-2h23q2 0 2 2v6H8z" fill="#41a5ee"/><path d="M8 8h27v8H8z" fill="#2b7cd3"/><path d="M8 16h27v8H8z" fill="#185abd"/><path d="M8 24h27v6q0 2-2 2H10q-2 0-2-2z" fill="#103f91"/><rect y="7" width="18" height="18" rx="1.500" fill="#1651b4"/><text x="9" y="21" text-anchor="middle" font-family="Roboto, sans-serif" font-weight="700" font-size="14" fill="#fff">W</text></svg></span>
    <span class="app run last"><svg width="40" height="40" viewBox="0 0 40 40"><use href="#chrome" width="35" height="35"/><circle cx="27" cy="27" r="12" fill="#b9b7a8"/><path d="M18 19c5-5 12-4 16 0l-8 5-6 9c-5-4-5-10-2-14z" fill="#8a9a78"/><path d="m24 24 8 2-2 8-7 4-3-5z" fill="#4b2d9c"/><path d="m28 21 5 3-5 4zM29 31l5-3-2 7z" fill="#f3ecf7"/></svg></span>
  </div>
  <div class="tray">
    <svg width="28" height="28" viewBox="0 0 28 28"><circle cx="14" cy="14" r="14" fill="url(#gSun)"/></svg>
    <span class="weather">29°C&nbsp; Sunny</span>
    <svg class="chev" width="18" height="11" viewBox="0 0 18 11"><path d="m.7 10 8.300-8.500 8.300 8.500" fill="none" stroke="#fff" stroke-width="1.500"/></svg>
    <svg class="cam" width="17" height="24" viewBox="0 -1 17 24"><path d="M1 5h10v12H1zM11 9.500 16 6v10l-5-3.500M3 1q5-2.500 10 0M3 21q5 2.500 10 0" fill="none" stroke="#fff" stroke-width="1.300"/></svg>
    <svg class="bat" width="24" height="17" viewBox="0 0 24 17"><path d="M7 3.700h15v11.600H4V10M22.500 7h1v5" fill="none" stroke="#fff" stroke-width="1.300"/><path d="M9 6h11v7.500H6V10z" fill="#fff"/><path d="M2 0v3M5.500 0v3M.5 3h6.500v3q-3 3-6.500 0zM3.500 7v3" fill="none" stroke="#fff" stroke-width="1.300"/></svg>
    <svg class="wifi" width="20" height="20" viewBox="0 0 20 20"><path d="M1 19.500C1 10 8 2 19 1M5 19.500C5 12 11 6 19 5.500M9 19.500C9 14 13 10.500 19 10M13 19.500c0-3 2-5 6-5.500" fill="none" stroke="#c9ced0" stroke-width="1.300"/><circle cx="17.500" cy="18" r="1.700" fill="#fff"/></svg>
    <svg class="spk" width="23" height="19" viewBox="0 0 23 19"><path d="M.7 6h4L10 1v17l-5.300-5h-4z" fill="none" stroke="#fff" stroke-width="1.300"/><path d="M13 7q1.500 2.500 0 5M16 4.500q3 5 0 10" fill="none" stroke="#ddd" stroke-width="1.300"/><path d="M19 2q5 7.500 0 15" fill="none" stroke="#7c878c" stroke-width="1.300"/></svg>
    <span class="eng">ENG</span>
    <div class="clock"><span>15:24</span><span>04-02-2022</span></div>
    <svg class="notif" width="37" height="37" viewBox="0 0 37 37"><path d="M0 1h24v18H13l-5 5v-5H0z" fill="#fff"/><path d="M5 6h14M5 10h14M5 14h14" stroke="#26343c" stroke-width="1.300"/><circle cx="24" cy="24" r="11.800" fill="#2b3236" stroke="#8c9498" stroke-width="1.200"/><path d="M12.500 21a12 12 0 0 1 11-8.500V19H13z" fill="#8c9498" opacity=".8"/><text x="24" y="30" text-anchor="middle" font-family="Open Sans, sans-serif" font-weight="600" font-size="16" fill="#fff">1</text></svg>
  </div>
  <div class="showdesk"></div>
</footer>
</body>
</html>
```
FILE: styles.css
```css
* { box-sizing: border-box; margin: 0; padding: 0; }
html, body { width: 1920px; height: 1080px; overflow: hidden; }
body { font-family: Roboto, sans-serif; display: flex; flex-direction: column; }
svg { display: block; flex: none; }
.defs { position: absolute; width: 0; height: 0; }
i, em { font-style: normal; }

/* browser tab strip */
.tabstrip { height: 51px; flex: none; background: #dee1e6; display: flex; align-items: flex-start; }
.tabs { display: flex; padding-top: 12px; }
.tab { width: 30px; height: 29px; padding: 2px 0 0 4px; border-right: 2px solid #919396; }
.tab svg { width: 21px; height: 24px; }
.tab.last { border-right-color: transparent; }
.tab.soft { opacity: .85; }
.wide .tab { width: 31.5px; padding-left: 2.500px; }
.wide .tab:first-child { width: 45px; padding-left: 17px; }
.wide .tab svg { width: 23px; }
.tab-active { width: 47px; display: flex; justify-content: center; }
.newtab { margin: 17px 0 0 23px; }
.winbtns { margin: 14px 27px 0 auto; display: flex; gap: 53px; }

/* address bar */
.toolbar { height: 56px; flex: none; background: #fff; border-bottom: 2px solid #d6d6d6; display: flex; align-items: center; padding-left: 23px; }
.fwd { margin-left: 28px; }
.reload { margin-left: 27px; }
.omnibox { width: 1548px; height: 42px; margin: 0 22px 0 22px; border-radius: 21px; background: #f1f3f4; display: flex; align-items: center; padding: 0 16px 0 20px; gap: 26px; }
.omnibox svg:first-child { margin-right: -9px; }
.url { flex: 1; font: 21px/42px "Open Sans", sans-serif; letter-spacing: -.49px; color: #66696d; white-space: pre; }
.url b { font-weight: 400; color: #202124; }
.media { margin-left: 23px; }
.kebab { margin-left: 28px; }
.avatar { width: 48px; height: 48px; border-radius: 50%; background: #33691e; color: #fff; font-size: 27px; line-height: 49px; text-align: center; }
.avatar.small { width: 33px; height: 33px; font-size: 19px; line-height: 33px; margin-left: 20px; }

.viewport { flex: 1; min-height: 0; display: flex; }
.page { width: 1896px; flex: none; display: flex; flex-direction: column; overflow: hidden; background: #f9f9f9; }
.pagescroll { width: 24px; flex: none; background: #f9f9f9; padding: 7px 6px; }
.pagescroll div { width: 12px; height: 154px; border-radius: 6px; background: #606060; }

/* site header */
.masthead { height: 84px; flex: none; background: #242424; display: flex; align-items: center; padding: 0 45px 1px 40px; }
.logo { margin: -5px 0 0 40px; }
.search { display: flex; width: 953px; height: 60px; margin-left: 158px; border: 1px solid #303030; }
.field { flex: 1; background: #121212; display: flex; align-items: center; justify-content: space-between; padding: 0 17px 0 18px; font-size: 24px; color: #eee; }
.go { width: 95px; background: #383838; display: flex; align-items: center; justify-content: center; }
.mic { width: 60px; height: 60px; border-radius: 50%; background: #181818; margin-left: 13px; display: flex; align-items: center; justify-content: center; }
.masticons { margin-left: auto; display: flex; align-items: center; gap: 45px; }
.masticons .avatar { margin-left: 5px; }

/* player */
.player { position: relative; height: 715px; flex: none; background: #000; }
.slide { width: 1008px; height: 715px; margin-left: 444px; background: #fff; display: flex; flex-direction: column; overflow: hidden; }
.wtitle { height: 39px; background: linear-gradient(#4d6fae, #3f64a4); color: #e8eef8; font-size: 8px; border-bottom: 1px solid #3a5e9c; }
.wbar { height: 23px; display: flex; align-items: center; padding-bottom: 6px; }
.qat { margin: 2px 0 0 12px; }
.doctitle { margin-left: 302px; display: flex; align-items: center; gap: 2px; width: 260px; letter-spacing: .18px; }
.docsearch { margin-left: 158px; width: 128px; height: 13px; background: #3b5888; border-radius: 2px; display: flex; align-items: center; gap: 2px; padding-left: 3px; color: #a9bbd9; }
.person { margin-left: 10px; }
.wtabs { display: flex; height: 15px; line-height: 14px; letter-spacing: .12px; }
.wtabs b { width: 35px; margin-left: 7px; background: #f6f6f6; color: #3f64a4; font-weight: 500; text-align: center; }
.wtabs span { margin-left: 16px; }
.wtabs b + span { margin-left: 9.500px; }
.share { margin: -2px 11px 0 auto; display: flex; align-items: center; gap: 2px; font-size: 8.500px; height: 14px; }
.share .up { margin-left: 5px; }
.ribbon { height: 48px; flex: none; background: #f5f5f5; border-bottom: 1px solid #d8d8d8; display: flex; }
.gallery { width: 554px; flex: none; height: 41px; margin-top: 3px; border: 1px solid #ddd; background: #fff; display: flex; align-items: center; gap: 5px; padding-left: 15px; }
.gallery > svg { margin-left: 3px; }
.card { width: 43px; height: 33px; border: 1px solid #ececec; background: #fff; display: flex; flex-direction: column; overflow: hidden; flex: none; color: #111; }
.card i { height: 21px; padding-left: 1px; font: 7.600px/22px "Liberation Sans", sans-serif; letter-spacing: -.45px; white-space: nowrap; overflow: hidden; }
.card u { height: 11px; background: #f0f0f0; text-decoration: none; text-align: center; font-size: 6.500px; line-height: 11px; color: #222; white-space: nowrap; }
.card.sel { box-shadow: 0 0 0 2px #b6c8e6; }
.card i.h1 { font-size: 13px; }
.card i.h2 { font-size: 12px; }
.card i.tt { font-size: 17px; }
.card i.sub { font-size: 11px; color: #777; }
.card i.it { font-style: italic; }
.card i.gray { color: #666; }
.card i.blue { color: #5b8fd6; }
.card i.bd { font-weight: 700; }
.pane { width: 26px; display: flex; flex-direction: column; align-items: center; padding-top: 6px; font-size: 7.500px; line-height: 8px; text-align: center; color: #333; }
.pane span { margin-top: 4px; }

.docarea { position: relative; height: 606px; flex: none; display: flex; }
.paper { width: 999px; flex: none; padding: 158.500px 0 0 124px; overflow: hidden; font: 25px/34.300px "Liberation Sans", sans-serif; color: #0a0a0a; }
/* the recording is squeezed horizontally, so the lines are narrowed as a block */
.paper p { width: 900px; transform: scaleX(.9075); transform-origin: 0 0; white-space: nowrap; }
.ln { display: block; height: 34.300px; line-height: 30px; background: #c8dcfc; }
.row { display: block; height: 34.300px; line-height: 33px; }
.l1 { width: 878px; letter-spacing: .04px; }
.l2 { width: 869px; letter-spacing: .02px; }
.l3 { width: 869px; }
.l4 { width: 809px; height: 46px; padding-top: 11.700px; }
.l5 { width: 888px; }
.l6 { width: 885px; letter-spacing: -.02px; }
.l7 { width: 176px; }
.paper em { color: #2458c8; }
.paper ins { text-decoration: underline #6f97e0 2px; text-underline-offset: 3px; text-decoration-skip-ink: none; }
.paper s { text-decoration: underline dotted #d8505a 2px; text-underline-offset: 3px; text-decoration-skip-ink: none; }
.q7 { margin-top: 66px; }
.plain { margin-top: 11.700px; }
.hand { position: absolute; left: 125px; top: 170px; opacity: .8; }
.vscroll { flex: 1; border-left: 1px solid #e6e6e6; background: #fafafa; padding: 30px 0 0 2px; }
.vscroll div { width: 5px; height: 13px; border-radius: 3px; background: #c4c4c4; }
.hscroll { width: 890px; height: 5px; margin: -1px 0 0 27px; border-radius: 3px; background: #b0b0b0; flex: none; }
.status { flex: 1; margin-top: 2px; border-top: 1px solid #999; background: #dcdcdc; display: flex; align-items: center; padding: 1px 0 0 14px; font-size: 7.600px; letter-spacing: .06px; color: #444; white-space: nowrap; }
.status span + span { margin-left: 12px; }
.status > svg { margin: 0 14px 0 11px; }
.status > .focus { margin-left: auto; display: flex; gap: 4px; }
.status > .views { margin: 0 4px 0 7px; }
.status .plus { margin-left: 0; }
.status .zoom { margin-right: 14px; }

.chrome-ui { position: absolute; inset: 0; display: flex; flex-direction: column; justify-content: flex-end; background: linear-gradient(transparent 400px, rgba(0,0,0,.05) 465px, rgba(0,0,0,.16) 550px, rgba(0,0,0,.24) 600px, rgba(0,0,0,.3) 642px, rgba(0,0,0,.4) 665px, rgba(0,0,0,.55) 687px, rgba(0,0,0,.68) 703px, rgba(0,0,0,.76) 715px); }
.progress { height: 5px; margin: 0 18px; background: rgba(255,255,255,.2); display: grid; }
.progress div { grid-area: 1 / 1; }
.loaded { width: 719px; background: rgba(255,255,255,.5); }
.played { width: 617px; background: #f00; }
.controls { height: 72px; display: flex; align-items: center; padding: 0 39px 0 45px; }
.play { margin-left: 52px; }
.next { margin-left: 47px; }
.vol { margin-left: 45px; }
.time { margin-left: 30px; font-size: 20px; letter-spacing: -.18px; color: #ddd; }
.cc { margin-left: auto; }
.gear { position: relative; margin-left: 40px; }
.gear b { position: absolute; left: 24px; top: -6px; width: 20px; height: 14px; background: #e00; color: #fff; font-size: 11px; line-height: 14px; text-align: center; border-radius: 1px; }
.mini { margin-left: 38px; }
.theater { margin-left: 38px; }
.full { margin-left: 42px; }

/* video details */
.below { flex: 1; min-height: 0; display: flex; overflow: hidden; padding-left: 216px; }
.info { width: 861px; padding-top: 33px; }
h1 { font-size: 27px; font-weight: 400; line-height: 32px; color: #0a0a0a; padding-top: 1px; }
.meta { display: flex; align-items: flex-start; margin-top: 23px; font-size: 21px; font-weight: 500; line-height: 25px; color: #0f0f0f; }
.meta span { margin-top: 2px; }
.meta .views-count { width: 248px; margin-top: -2px; font-weight: 400; color: #606060; }
.views-count i { color: #0f0f0f; }
.n17 { width: 60px; padding-left: 14px; }
.ls { letter-spacing: .6px; margin-left: 12px; }
.down { margin-left: 14px; margin-top: 1px; }
.shr { margin-left: 34px; }
.sav { margin: 5px 0 0 34px; }
.more { margin: 13px 0 0 38px; }
.playlist { width: 603px; height: 200px; margin-top: 36px; border: 1px solid #dedede; background: #fff; display: flex; align-items: flex-start; justify-content: space-between; padding: 21px 29px 0 25px; }
h2 { font-size: 21px; font-weight: 500; line-height: 26px; color: #0a0a0a; white-space: nowrap; }
.playlist p { font-size: 18px; line-height: 24px; margin-top: 7px; color: #111; }
.playlist i { color: #606060; }
.playlist svg { margin-top: 22px; }

/* taskbar */
.taskbar { height: 60px; flex: none; background: linear-gradient(90deg, #25353e, #29373b 60%, #222f38 68%, #2b2c2c 75%, #1f2d35 82%, #1f2c34); display: flex; color: #fff; }
.start { width: 292px; display: flex; align-items: center; padding-left: 24px; gap: 48px; }
.apps { display: flex; }
.app { width: 75px; display: flex; align-items: center; justify-content: center; border-bottom: 3px solid transparent; padding-top: 3px; }
.app.run { background: linear-gradient(#76b9ed, #76b9ed) 50% 100% / 61px 3px no-repeat border-box; }
.app.on { width: 73px; margin: 0 1px; padding-left: 2px; background: linear-gradient(#76b9ed, #76b9ed) 0 100% / 73px 3px no-repeat border-box, linear-gradient(90deg, #525f68 66px, #3d4a50 66px 68px, #525f68 68px); }
.app.multi { background: linear-gradient(#76b9ed, #76b9ed) 7px 100% / 47px 3px no-repeat border-box, linear-gradient(#557f9f, #557f9f) 54px 100% / 14px 3px no-repeat border-box; }
.app.last { padding-left: 5px; }
.tray { margin-left: auto; display: flex; align-items: center; font-family: "Open Sans", sans-serif; padding-right: 17px; font-size: 17.500px; }
.weather { width: 113px; margin: 4px 0 0 16px; font-size: 19px; letter-spacing: .75px; white-space: nowrap; }
.chev { margin-left: 26px; }
.cam { margin-left: 19px; }
.bat { margin-left: 15px; }
.wifi { margin-left: 16px; }
.spk { margin-left: 13px; }
.eng { margin-left: 17px; width: 34px; letter-spacing: -.6px; }
.clock { width: 96px; margin-left: 19px; display: flex; flex-direction: column; align-items: center; line-height: 28px; }
.notif { margin: 5px 0 0 27px; }
.showdesk { width: 8px; border-left: 1px solid #7d868b; }
```
